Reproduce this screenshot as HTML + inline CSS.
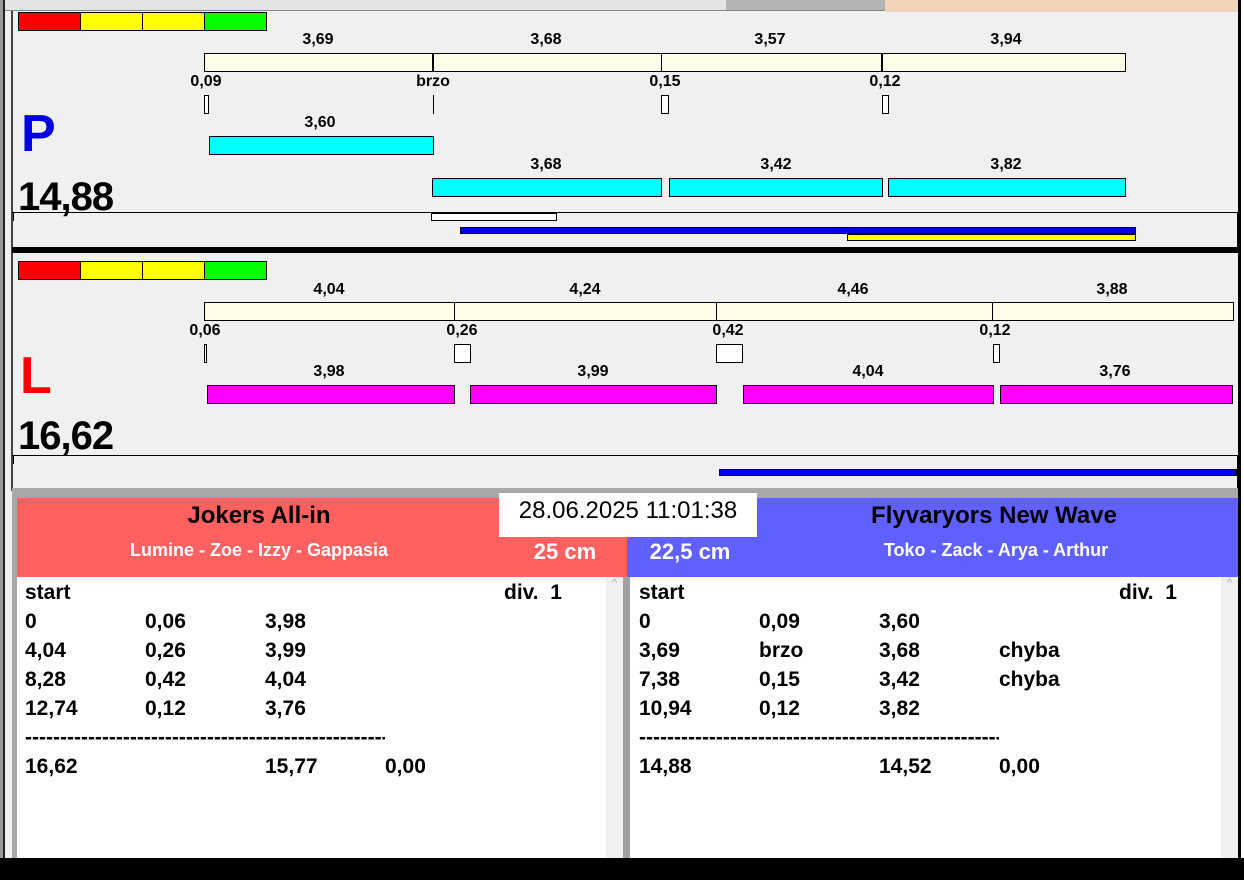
<!DOCTYPE html>
<html><head><meta charset="utf-8"><style>
*{margin:0;padding:0;box-sizing:border-box}
body{width:1244px;height:880px;background:#fff;position:relative;overflow:hidden;font-family:"Liberation Sans",Arial,sans-serif}
.a{position:absolute}
.t{position:absolute;font-weight:bold;font-size:16px;line-height:16px;transform:translateX(-50%);white-space:nowrap;color:#000}
.b{position:absolute;border:1px solid #000}
.r{position:absolute;font-weight:bold;font-size:21px;line-height:24px;white-space:nowrap}
</style></head><body>
<div class="a" style="left:0;top:0;width:1238px;height:880px;background:#f0f0f0"></div>
<div class="a" style="left:0;top:0;width:885px;height:11px;background:#e4e4e4;border-bottom:1px solid #888"></div>
<div class="a" style="left:726px;top:0;width:159px;height:10px;background:#b4b4b4"></div>
<div class="a" style="left:885px;top:0;width:353px;height:12px;background:#f0d4b8"></div>
<div class="a" style="left:1238px;top:0;width:3px;height:880px;background:#000"></div>
<div class="a" style="left:0;top:0;width:3px;height:880px;background:#999"></div>
<div class="a" style="left:3px;top:0;width:2px;height:880px;background:#222"></div>
<div class="a" style="left:11px;top:11px;width:2px;height:480px;background:#444"></div>

<div class="a" style="left:18px;top:12px;width:249px;height:19px;border:1px solid #000;display:flex">
<div style="flex:1;background:#f00;border-right:1px solid #000"></div><div style="flex:1;background:#ff0;border-right:1px solid #000"></div><div style="flex:1;background:#ff0;border-right:1px solid #000"></div><div style="flex:1;background:#0f0"></div></div>
<div class="b" style="left:204px;top:53px;width:922px;height:19px;background:#fffde8"></div>
<div class="a" style="left:432px;top:53px;width:2px;height:19px;background:#000"></div>
<div class="a" style="left:661px;top:53px;width:1px;height:19px;background:#000"></div>
<div class="a" style="left:881px;top:53px;width:2px;height:19px;background:#000"></div>
<div class="t" style="left:318px;top:32px">3,69</div><div class="t" style="left:546px;top:32px">3,68</div><div class="t" style="left:770px;top:32px">3,57</div><div class="t" style="left:1006px;top:32px">3,94</div>
<div class="t" style="left:206px;top:74px">0,09</div><div class="t" style="left:433px;top:74px">brzo</div><div class="t" style="left:665px;top:74px">0,15</div><div class="t" style="left:885px;top:74px">0,12</div>
<div class="b" style="left:204px;top:95px;width:5px;height:19px;background:#fff"></div>
<div class="a" style="left:433px;top:95px;width:1px;height:19px;background:#000"></div>
<div class="b" style="left:661px;top:95px;width:8px;height:19px;background:#fff"></div>
<div class="b" style="left:882px;top:95px;width:7px;height:19px;background:#fff"></div>
<div class="a" style="left:21px;top:104px;font-size:52px;font-weight:bold;color:#0000e0;line-height:60px">P</div>
<div class="t" style="left:320px;top:115px">3,60</div>
<div class="b" style="left:209px;top:136px;width:225px;height:19px;background:#0ff"></div>
<div class="t" style="left:546px;top:157px">3,68</div><div class="t" style="left:776px;top:157px">3,42</div><div class="t" style="left:1006px;top:157px">3,82</div>
<div class="b" style="left:432px;top:178px;width:230px;height:19px;background:#0ff"></div>
<div class="b" style="left:669px;top:178px;width:214px;height:19px;background:#0ff"></div>
<div class="b" style="left:888px;top:178px;width:238px;height:19px;background:#0ff"></div>
<div class="a" style="left:18px;top:174px;font-size:40px;font-weight:bold;line-height:46px;letter-spacing:-1px">14,88</div>
<div class="a" style="left:12px;top:212px;width:1226px;height:36px;border-top:1px solid #000;border-right:1px solid #000"></div>
<div class="a" style="left:13px;top:213px;width:1px;height:8px;background:#000"></div>
<div class="b" style="left:431px;top:213px;width:126px;height:8px;background:#fff"></div>
<div class="b" style="left:460px;top:227px;width:676px;height:7px;background:#0000e0"></div>
<div class="b" style="left:847px;top:234px;width:289px;height:7px;background:#ff0"></div>
<div class="a" style="left:12px;top:247px;width:1226px;height:6px;background:#000"></div>

<div class="a" style="left:18px;top:261px;width:249px;height:19px;border:1px solid #000;display:flex">
<div style="flex:1;background:#f00;border-right:1px solid #000"></div><div style="flex:1;background:#ff0;border-right:1px solid #000"></div><div style="flex:1;background:#ff0;border-right:1px solid #000"></div><div style="flex:1;background:#0f0"></div></div>
<div class="b" style="left:204px;top:302px;width:1030px;height:19px;background:#fffde8"></div>
<div class="a" style="left:454px;top:302px;width:1px;height:19px;background:#000"></div>
<div class="a" style="left:716px;top:302px;width:1px;height:19px;background:#000"></div>
<div class="a" style="left:992px;top:302px;width:1px;height:19px;background:#000"></div>
<div class="t" style="left:329px;top:282px">4,04</div><div class="t" style="left:585px;top:282px">4,24</div><div class="t" style="left:853px;top:282px">4,46</div><div class="t" style="left:1112px;top:282px">3,88</div>
<div class="t" style="left:205px;top:323px">0,06</div><div class="t" style="left:462px;top:323px">0,26</div><div class="t" style="left:728px;top:323px">0,42</div><div class="t" style="left:995px;top:323px">0,12</div>
<div class="b" style="left:204px;top:344px;width:3px;height:19px;background:#fff"></div>
<div class="b" style="left:454px;top:344px;width:17px;height:19px;background:#fff"></div>
<div class="b" style="left:716px;top:344px;width:27px;height:19px;background:#fff"></div>
<div class="b" style="left:993px;top:344px;width:7px;height:19px;background:#fff"></div>
<div class="a" style="left:20px;top:346px;font-size:52px;color:#f00;line-height:60px;font-weight:bold">L</div>
<div class="t" style="left:329px;top:364px">3,98</div><div class="t" style="left:593px;top:364px">3,99</div><div class="t" style="left:868px;top:364px">4,04</div><div class="t" style="left:1115px;top:364px">3,76</div>
<div class="b" style="left:207px;top:385px;width:248px;height:19px;background:#f0f"></div>
<div class="b" style="left:470px;top:385px;width:247px;height:19px;background:#f0f"></div>
<div class="b" style="left:743px;top:385px;width:251px;height:19px;background:#f0f"></div>
<div class="b" style="left:1000px;top:385px;width:233px;height:19px;background:#f0f"></div>
<div class="a" style="left:18px;top:413px;font-size:40px;font-weight:bold;line-height:46px;letter-spacing:-1px">16,62</div>
<div class="a" style="left:12px;top:455px;width:1226px;height:34px;border-top:1px solid #000;border-right:1px solid #000"></div>
<div class="a" style="left:13px;top:456px;width:1px;height:8px;background:#000"></div>
<div class="b" style="left:719px;top:469px;width:518px;height:7px;background:#0000e0"></div>
<div class="a" style="left:12px;top:488px;width:1226px;height:10px;background:#a8a8a8"></div>
<div class="a" style="left:12px;top:498px;width:5px;height:380px;background:#a8a8a8"></div>

<div class="a" style="left:17px;top:498px;width:610px;height:79px;background:#ff6060"></div>
<div class="a" style="left:627px;top:498px;width:611px;height:79px;background:#6060ff"></div>
<div class="a" style="left:499px;top:493px;width:258px;height:44px;background:#fff;font-size:24px;line-height:36px;text-align:center">28.06.2025 11:01:38</div>
<div class="t" style="left:259px;top:503px;font-size:24px;line-height:26px">Jokers All-in</div>
<div class="t" style="left:259px;top:540px;font-size:18px;line-height:20px;color:#fff">Lumine - Zoe - Izzy - Gappasia</div>
<div class="t" style="left:565px;top:540px;font-size:22px;line-height:24px;color:#fff">25 cm</div>
<div class="t" style="left:994px;top:503px;font-size:24px;line-height:26px">Flyvaryors New Wave</div>
<div class="t" style="left:996px;top:540px;font-size:18px;line-height:20px;color:#fff">Toko - Zack - Arya - Arthur</div>
<div class="t" style="left:690px;top:540px;font-size:22px;line-height:24px;color:#fff">22,5 cm</div>

<div class="a" style="left:17px;top:577px;width:589px;height:281px;background:#fff"></div>
<div class="a" style="left:606px;top:577px;width:17px;height:281px;background:#f0f0f0;color:#aaa;font-size:11px;text-align:center">^</div>
<div class="a" style="left:623px;top:577px;width:7px;height:281px;background:#a0a0a0"></div>
<div class="a" style="left:630px;top:577px;width:591px;height:281px;background:#fff"></div>
<div class="a" style="left:1221px;top:577px;width:17px;height:281px;background:#f0f0f0;color:#aaa;font-size:11px;text-align:center">^</div>
<div class="a" style="left:0;top:858px;width:1244px;height:22px;background:#000"></div>

<div class="r" style="left:25px;top:581px">start</div><div class="r" style="left:504px;top:581px">div.&nbsp; 1</div>
<div class="r" style="left:25px;top:610px">0</div><div class="r" style="left:145px;top:610px">0,06</div><div class="r" style="left:265px;top:610px">3,98</div>
<div class="r" style="left:25px;top:639px">4,04</div><div class="r" style="left:145px;top:639px">0,26</div><div class="r" style="left:265px;top:639px">3,99</div>
<div class="r" style="left:25px;top:668px">8,28</div><div class="r" style="left:145px;top:668px">0,42</div><div class="r" style="left:265px;top:668px">4,04</div>
<div class="r" style="left:25px;top:697px">12,74</div><div class="r" style="left:145px;top:697px">0,12</div><div class="r" style="left:265px;top:697px">3,76</div>
<div class="r" style="left:25px;top:726px;width:360px;overflow:hidden">----------------------------------------------------</div>
<div class="r" style="left:25px;top:755px">16,62</div><div class="r" style="left:265px;top:755px">15,77</div><div class="r" style="left:385px;top:755px">0,00</div>

<div class="r" style="left:639px;top:581px">start</div><div class="r" style="left:1119px;top:581px">div.&nbsp; 1</div>
<div class="r" style="left:639px;top:610px">0</div><div class="r" style="left:759px;top:610px">0,09</div><div class="r" style="left:879px;top:610px">3,60</div>
<div class="r" style="left:639px;top:639px">3,69</div><div class="r" style="left:759px;top:639px">brzo</div><div class="r" style="left:879px;top:639px">3,68</div><div class="r" style="left:999px;top:639px">chyba</div>
<div class="r" style="left:639px;top:668px">7,38</div><div class="r" style="left:759px;top:668px">0,15</div><div class="r" style="left:879px;top:668px">3,42</div><div class="r" style="left:999px;top:668px">chyba</div>
<div class="r" style="left:639px;top:697px">10,94</div><div class="r" style="left:759px;top:697px">0,12</div><div class="r" style="left:879px;top:697px">3,82</div>
<div class="r" style="left:639px;top:726px;width:360px;overflow:hidden">----------------------------------------------------</div>
<div class="r" style="left:639px;top:755px">14,88</div><div class="r" style="left:879px;top:755px">14,52</div><div class="r" style="left:999px;top:755px">0,00</div>
</body></html>
